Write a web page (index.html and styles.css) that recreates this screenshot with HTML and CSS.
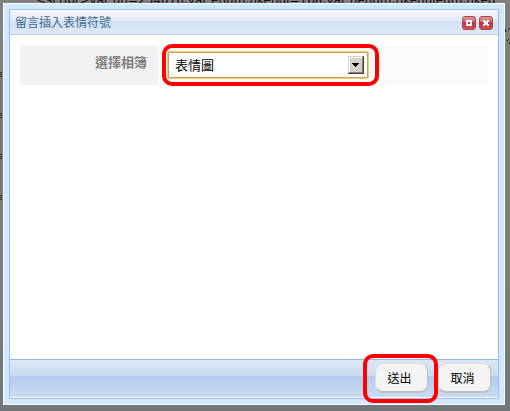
FILE: index.html
```html
<!DOCTYPE html>
<html lang="zh-Hant">
<head>
	<meta charset="UTF-8">
	<meta name="viewport" content="width=device-width, initial-scale=1.0">
	<title>留言插入表情符號</title>
	<link rel="stylesheet" href="styles.css">
</head>
<body>
	<div class="backdrop" aria-hidden="true">
		<div class="code-line">&lt;script&gt;var uh=254016;var ehum;nkehul=168;var nehum;nkehuleum;nkeg</div>
		<div class="edge-marks"></div>
		<svg class="edge-strokes" viewBox="0 0 5 18"><path d="M0 2l1 3M3 3l2-2M4 12l-2 2M4 15l1 2" fill="none" stroke="#111"/></svg>
	</div>
	<form class="dialog">
		<div class="dialog-inner">
			<header class="title-bar">
				<h1>留言插入表情符號</h1>
				<button type="button" class="tool" aria-label="放大">
					<svg viewBox="0 0 12 12"><path d="M4 4h4v4H4z" fill="none" stroke="#fff" stroke-width="2"/></svg>
				</button>
				<button type="button" class="tool" aria-label="關閉">
					<svg viewBox="0 0 12 12"><path d="M3 3h2v1h2V3h2v2H8v2h1v2H7V8H5v1H3V7h1V5H3z" fill="#fff"/></svg>
				</button>
			</header>
			<main class="content">
				<div class="field">
					<label for="album">選擇相簿</label>
					<div class="value">
						<div class="select-box marked">
							<select id="album"><option>表情圖</option></select>
							<svg class="arrow" viewBox="0 0 16 18">
								<path d="M0 0h16v18H0z" fill="#404040"/>
								<path d="M0 0h15v17H0z" fill="#d4d0c8"/>
								<path d="M1 1h14v16H1z" fill="#808080"/>
								<path d="M1 1h13v15H1z" fill="#fff"/>
								<path d="M2 2h12v14H2z" fill="#d4d0c8"/>
								<path d="M4 7h7v1h-1v1H9v1H8v1H7v-1H6V9H5V8H4z" fill="#000"/>
							</svg>
						</div>
					</div>
				</div>
			</main>
			<footer class="buttons">
				<div class="marked"><button type="submit">送出</button></div>
				<button type="button">取消</button>
			</footer>
		</div>
	</form>
</body>
</html>
```

FILE: styles.css
```css
* {
	box-sizing: border-box;
}

body {
	margin: 0;
	padding: 3px 5px 6px 3px;
	height: 100vh;
	font-family: "Liberation Sans", "Noto Sans CJK TC", sans-serif;
	font-size: 12px;
	background: linear-gradient(#808080, #7b7d7e 70%, #70767a);
}

/* page that stays dimmed behind the dialog */
.backdrop {
	position: absolute;
	top: 0;
	right: 0;
	bottom: 0;
	left: 0;
	overflow: hidden;
	color: #111;
}

.code-line {
	margin: -8px 0 0 36px;
	font-family: "DejaVu Sans", sans-serif;
	font-size: 12px;
	line-height: 16px;
	white-space: nowrap;
}

.edge-marks {
	width: 2px;
	height: 130px;
	margin-top: 64px;
	background: repeating-linear-gradient(#333 0 1px, #777 1px 2px, #333 2px 3px, #777 3px 4px, #333 4px 5px, #777 5px 41px);
}

.edge-strokes {
	position: absolute;
	top: 27px;
	right: 0;
	width: 5px;
	height: 18px;
}

.dialog {
	position: relative;
	height: 100%;
	padding: 5px;
	border: 1px solid #fff;
	background: #d0e9ff;
}

.dialog-inner {
	display: flex;
	flex-direction: column;
	height: 100%;
	border: 1px solid #99bbee;
	background: #fff;
}

.title-bar {
	display: flex;
	align-items: center;
	gap: 3px;
	height: 25px;
	padding: 0 5px;
	border-top: 1px solid #fff;
	border-bottom: 1px solid #b0d0f0;
	background: linear-gradient(#f0f4fc, #e2eaf7 45%, #d3e0f3 46%, #dee8f5);
}

.title-bar h1 {
	flex: 1;
	margin: 0;
	font-size: 12px;
	font-weight: normal;
	line-height: 16px;
	color: #416a8c;
}

.tool {
	width: 14px;
	height: 14px;
	padding: 0;
	border: 1px solid #a3484c;
	border-radius: 3px;
	background: linear-gradient(#d9989b, #cb6268 45%, #c4303c 46%, #cf5058);
}

.tool svg {
	display: block;
	width: 12px;
	height: 12px;
}

.content {
	flex: 1;
	padding: 10px;
}

.field {
	display: flex;
	height: 40px;
}

.field label {
	width: 138px;
	padding: 10px 11px 0 0;
	font-size: 13px;
	font-weight: bold;
	line-height: 16px;
	text-align: right;
	color: #808080;
	background: #f2f2f2;
}

.value {
	flex: 1;
	padding: 6px 9px;
	background: #fafafa;
}

.select-box {
	width: 202px;
	height: 28px;
}

.select-box select {
	width: 100%;
	height: 100%;
	padding: 0 6px;
	border: 2px solid #d0a048;
	border-radius: 3px;
	outline: 1px solid #f3c980;
	outline-offset: -1px;
	appearance: none;
	font-family: inherit;
	font-size: 13px;
	color: #000;
	background: #fff;
}

.arrow {
	position: absolute;
	top: 5px;
	right: 5px;
	width: 16px;
	height: 18px;
	pointer-events: none;
}

/* red highlight round a control */
.marked {
	position: relative;
}

.marked::after {
	content: "";
	position: absolute;
	top: -7px;
	right: -10px;
	bottom: -7px;
	left: -5px;
	border: 4px solid #f00;
	border-radius: 10px;
	pointer-events: none;
}

.buttons {
	display: flex;
	justify-content: flex-end;
	gap: 10px;
	height: 39px;
	padding: 3px 7px 0;
	border-top: 1px solid #99b3e4;
	border-bottom: 1px solid #fff;
	background: linear-gradient(#dde8f5, #c9daf0 43%, #b4cbed 44%, #cadbf1);
}

.buttons button {
	width: 53px;
	height: 30px;
	padding: 0 4px 0 0;
	border: 1px solid #ddd;
	border-right-color: #bbb;
	border-bottom: 2px solid #c0c0c0;
	border-radius: 8px;
	font-family: inherit;
	font-size: 12px;
	color: #000;
	background: #f4f4f4;
}

.buttons .marked::after {
	top: -9px;
	bottom: -6px;
	left: -12px;
}
```
